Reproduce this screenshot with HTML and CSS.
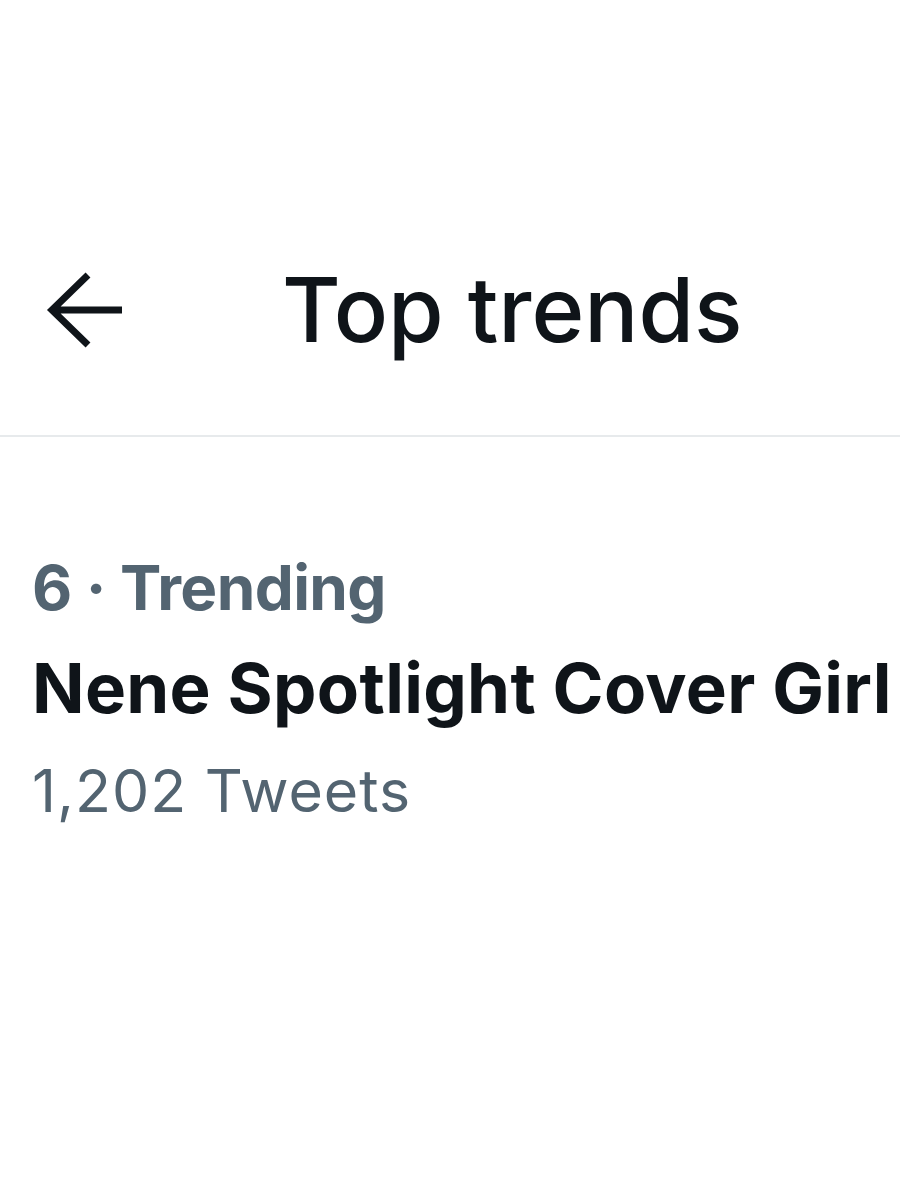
FILE: index.html
```html
<!DOCTYPE html>
<html>
<head>
<meta charset="utf-8">
<link rel="stylesheet" href="styles.css">
</head>
<body>
<div class="page">
  <header class="header">
    <div class="back">
      <svg class="back-icon" viewBox="0 0 80 80" width="80" height="80">
        <path d="M44 5 L8 40 L44 75 M8 40 H78" fill="none" stroke="#0f1419" stroke-width="7" stroke-linejoin="miter"/>
      </svg>
    </div>
    <h1 class="title">Top trends</h1>
  </header>
  <div class="trend">
    <div class="meta">6 · Trending</div>
    <div class="name">Nene Spotlight Cover Girl</div>
    <div class="count">1,202 Tweets</div>
  </div>
</div>
</body>
</html>
```
FILE: styles.css
```css
html, body {
  margin: 0;
  padding: 0;
  background: #ffffff;
}
.page {
  width: 900px;
  font-family: Inter, "Liberation Sans", Arial, sans-serif;
}
.header {
  box-sizing: border-box;
  height: 437px;
  padding-top: 184px;
  display: flex;
  align-items: center;
  border-bottom: 2px solid #e7eaec;
}
.back {
  width: 80px;
  height: 251px;
  margin-left: 44px;
  display: flex;
  align-items: center;
}
.back-icon {
  display: block;
}
.title {
  margin: 0 0 0 158px;
  font-size: 90px;
  font-weight: 500;
  color: #0f1419;
  line-height: normal;
}
.trend {
  padding: 101px 0 0 32px;
}
.meta {
  font-size: 62px;
  font-weight: 700;
  color: #536471;
  line-height: 100px;
  letter-spacing: -0.6px;
}
.name {
  font-size: 69px;
  font-weight: 700;
  color: #0f1419;
  line-height: 100px;
  white-space: nowrap;
  letter-spacing: 0.3px;
}
.count {
  margin-top: 3px;
  font-size: 59px;
  font-weight: 400;
  color: #536471;
  line-height: 100px;
  letter-spacing: 1px;
}
```
